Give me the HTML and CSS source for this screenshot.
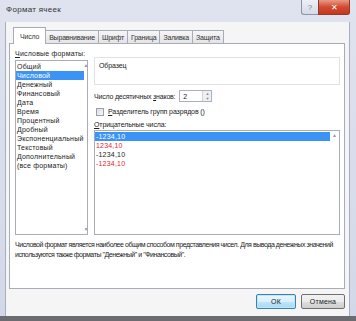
FILE: index.html
```html
<!DOCTYPE html>
<html lang="ru">
<head>
    <meta charset="UTF-8">
    <meta name="viewport" content="width=device-width, initial-scale=1.0">
    <title>Формат ячеек</title>
    <link rel="stylesheet" href="styles.css">
</head>
<body>
    <div class="window">
        <div class="titlebar">
            <span class="title">Формат ячеек</span>
            <div class="caption-buttons">
                <div class="caption-btn help">?</div>
                <div class="caption-btn close">✕</div>
            </div>
        </div>

        <div class="client">
            <div class="tabs">
                <div class="tab active">Число</div>
                <div class="tab">Выравнивание</div>
                <div class="tab">Шрифт</div>
                <div class="tab">Граница</div>
                <div class="tab">Заливка</div>
                <div class="tab">Защита</div>
            </div>

            <div class="panel">
                <div class="main">
                    <div class="formats">
                        <div class="label"><u>Ч</u>исловые форматы:</div>
                        <div class="listbox format-list">
                            <ul>
                                <li>Общий</li>
                                <li class="selected">Числовой</li>
                                <li>Денежный</li>
                                <li>Финансовый</li>
                                <li>Дата</li>
                                <li>Время</li>
                                <li>Процентный</li>
                                <li>Дробный</li>
                                <li>Экспоненциальный</li>
                                <li>Текстовый</li>
                                <li>Дополнительный</li>
                                <li>(все форматы)</li>
                            </ul>
                            <div class="scrollbar">
                                <span class="arrow">▲</span>
                                <span class="arrow">▼</span>
                            </div>
                        </div>
                    </div>

                    <div class="options">
                        <div class="sample">
                            <span class="sample-label">Образец</span>
                        </div>

                        <div class="decimals">
                            <span class="decimals-label">Число десятичных <u>з</u>наков:</span>
                            <div class="spinner">
                                <span class="spinner-value">2</span>
                                <div class="spinner-arrows">
                                    <span>▲</span>
                                    <span>▼</span>
                                </div>
                            </div>
                        </div>

                        <label class="check-row">
                            <span class="checkbox"></span>
                            <span><u>Р</u>азделитель групп разрядов ()</span>
                        </label>

                        <div class="label"><u>О</u>трицательные числа:</div>
                        <div class="listbox negative-list">
                            <ul>
                                <li class="selected">-1234,10</li>
                                <li class="red">1234,10</li>
                                <li>-1234,10</li>
                                <li class="red">-1234,10</li>
                            </ul>
                            <div class="scrollbar">
                                <span class="arrow">▲</span>
                            </div>
                        </div>
                    </div>
                </div>

                <p class="description">
                    Числовой формат является наиболее общим способом представления чисел. Для вывода денежных значений используются также форматы "Денежный" и "Финансовый".
                </p>
            </div>

            <div class="buttons">
                <button class="btn default">ОК</button>
                <button class="btn">Отмена</button>
            </div>
        </div>
    </div>
</body>
</html>
```

FILE: styles.css
```css
* {
    margin: 0;
    padding: 0;
    box-sizing: border-box;
}

body {
    width: 356px;
    height: 321px;
    overflow: hidden;
    background: #fff;
    font-family: 'Liberation Sans', Arial, sans-serif;
    font-size: 7px;
    letter-spacing: 0.2px;
    color: #222;
}

.window {
    width: 356px;
    height: 321px;
    display: flex;
    flex-direction: column;
    background: linear-gradient(to bottom, #dfe3ef, #d3d8e8);
    border-bottom: 5px solid #6b6b70;
}

/* Title bar */
.titlebar {
    height: 22px;
    display: flex;
    align-items: flex-start;
    justify-content: space-between;
    padding-left: 6px;
    padding-right: 6px;
}

.title {
    margin-top: 5px;
    font-size: 8px;
    letter-spacing: 0.3px;
    color: #333;
}

.caption-buttons {
    display: flex;
}

.caption-btn {
    height: 15px;
    display: flex;
    align-items: center;
    justify-content: center;
    font-size: 8px;
    letter-spacing: 0;
    border: 1px solid #8d93a8;
    border-top: none;
}

.caption-btn.help {
    width: 17px;
    color: #7a869c;
    background: linear-gradient(to bottom, #edf0f6, #d5dae6);
    border-radius: 0 0 0 3px;
    border-right: none;
}

.caption-btn.close {
    width: 32px;
    color: #fff;
    background: linear-gradient(to bottom, #e89a88, #d24b30 50%, #c8361e);
    border-color: #8f3a2c;
    border-radius: 0 0 3px 0;
}

/* Client area */
.client {
    flex: 1;
    margin: 0 6px 0 5px;
    background: #f5f5f6;
    border-left: 1px solid #a9aebd;
    border-right: 1px solid #a9aebd;
    display: flex;
    flex-direction: column;
    padding: 5px 4px 0 3px;
}

.tabs {
    display: flex;
    align-items: flex-end;
    padding-left: 4px;
    height: 16px;
    position: relative;
    z-index: 1;
}

.tab {
    height: 13px;
    padding: 0 3px;
    display: flex;
    align-items: center;
    letter-spacing: -0.2px;
    border: 1px solid #a7acb6;
    border-bottom: none;
    border-right: none;
    background: linear-gradient(to bottom, #f6f6f7, #e4e4e6);
    color: #333;
}

.tab:last-child {
    border-right: 1px solid #a7acb6;
}

.tab.active {
    height: 17px;
    margin-bottom: -1px;
    padding: 0 6px;
    background: #fff;
    border-right: 1px solid #a7acb6;
}

.tab.active + .tab {
    border-left: none;
}

/* Tab panel */
.panel {
    height: 246px;
    background: #fff;
    border: 1px solid #a7acb6;
    padding: 5px 4px 0 5px;
}

.main {
    display: flex;
    gap: 6px;
}

.label {
    height: 9px;
    line-height: 9px;
}

.formats {
    width: 73px;
    display: flex;
    flex-direction: column;
    gap: 2px;
}

.listbox {
    border: 1px solid #a9adb5;
    display: flex;
    background: #fff;
}

.listbox ul {
    flex: 1;
    list-style: none;
    padding-top: 1px;
}

.listbox li {
    height: 9px;
    line-height: 9px;
    padding-left: 1px;
    white-space: nowrap;
}

.listbox li.selected {
    background: #3b94f5;
    color: #fff;
}

.listbox li.red {
    color: #e3262c;
}

.scrollbar {
    width: 9px;
    display: flex;
    flex-direction: column;
    justify-content: space-between;
    align-items: center;
}

.arrow {
    font-size: 5px;
    color: #9a9a9a;
    line-height: 9px;
}

.format-list {
    height: 175px;
}

/* Right column */
.options {
    flex: 1;
    padding-top: 8px;
    display: flex;
    flex-direction: column;
    letter-spacing: -0.1px;
}

.sample {
    height: 28px;
    border: 1px solid #e2e2e2;
    padding: 4px 0 0 4px;
}

.decimals {
    margin-top: 5px;
    height: 12px;
    display: flex;
    align-items: center;
    gap: 4px;
}

.decimals-label {
    letter-spacing: -0.2px;
}

.spinner {
    width: 33px;
    height: 12px;
    border: 1px solid #abb0ba;
    display: flex;
    align-items: center;
    justify-content: space-between;
}

.spinner-value {
    padding-left: 3px;
}

.spinner-arrows {
    width: 9px;
    height: 10px;
    display: flex;
    flex-direction: column;
    align-items: center;
    justify-content: center;
    font-size: 4px;
    line-height: 5px;
    color: #8a8a8a;
    background: #eef0f3;
    border-left: 1px solid #d0d3d9;
}

.check-row {
    margin-top: 4px;
    height: 11px;
    display: flex;
    align-items: center;
    gap: 4px;
    padding-left: 2px;
}

.checkbox {
    width: 8px;
    height: 8px;
    border: 1px solid #9aa0ab;
    background: linear-gradient(135deg, #dadde3, #f7f7f8);
}

.options .label {
    margin-top: 3px;
}

.negative-list {
    margin-top: 1px;
    height: 105px;
}

.negative-list li {
    letter-spacing: 0.2px;
}

.negative-list .scrollbar {
    justify-content: flex-start;
}

/* Description */
.description {
    margin-top: 5px;
    line-height: 10px;
    letter-spacing: -0.45px;
}

/* Buttons */
.buttons {
    display: flex;
    justify-content: flex-end;
    gap: 5px;
    margin-top: 5px;
}

.btn {
    height: 15px;
    font-family: inherit;
    font-size: 7px;
    letter-spacing: 0.2px;
    color: #222;
    border: 1px solid #707070;
    border-radius: 2px;
    background: linear-gradient(to bottom, #f2f2f2, #ebebeb 50%, #dddddd 51%, #cfcfcf);
}

.btn.default {
    width: 40px;
    border-color: #3c7fb1;
    box-shadow: inset 0 0 0 1px #c0e6f9;
    background: linear-gradient(to bottom, #eaf6fd, #d9f0fc 50%, #bee6fd 51%, #a7d9f5);
}

.btn:last-child {
    width: 44px;
}
```
